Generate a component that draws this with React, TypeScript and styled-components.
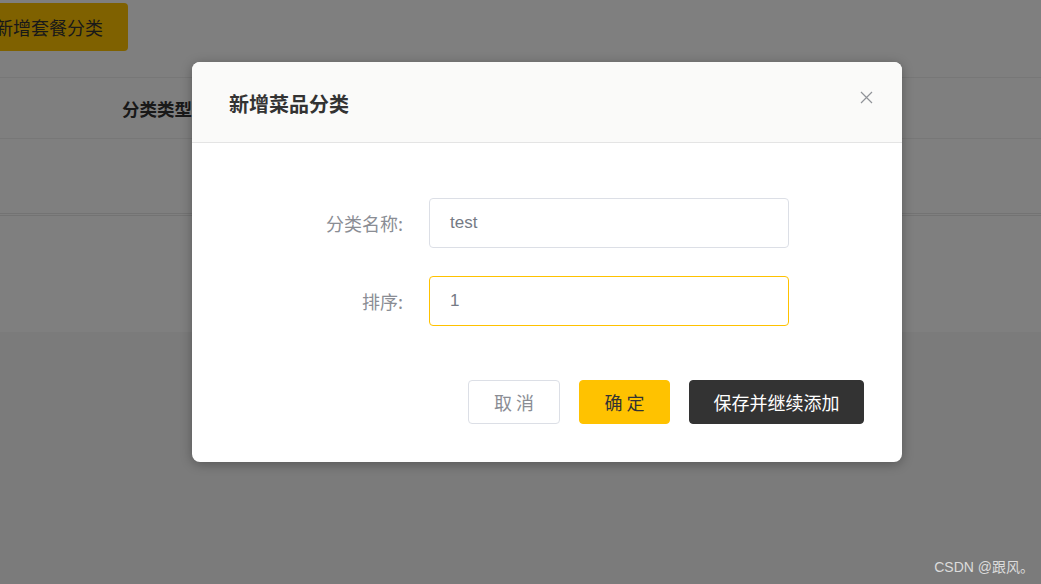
import React from "react";
import styled, { createGlobalStyle } from "styled-components";

const Global = createGlobalStyle`
  html, body { margin: 0; padding: 0; }
  body {
    width: 1041px;
    height: 584px;
    overflow: hidden;
    background: #f6f6f6;
    font-family: "Noto Sans CJK SC", "Liberation Sans", sans-serif;
  }
`;

const Page = styled.div`
  position: relative;
  width: 1041px;
  height: 584px;
`;

const Card = styled.div`
  background: #ffffff;
  height: 332px;
  display: flex;
  flex-direction: column;
`;

const Toolbar = styled.div`
  height: 77px;
  display: flex;
  align-items: flex-start;
  padding-top: 3px;
  box-sizing: border-box;
`;

const TopButton = styled.button`
  margin-left: -30px;
  height: 48px;
  padding: 0 25px;
  border: none;
  border-radius: 4px;
  background: #ffc200;
  color: #333;
  font-family: inherit;
  font-size: 18px;
`;

const TableHeader = styled.div`
  height: 60px;
  border-top: 1px solid #eeeeee;
  border-bottom: 1px solid #eeeeee;
  display: flex;
  align-items: center;
  padding-left: 122px;
  font-size: 17.5px;
  font-weight: 700;
  color: #333;
`;

const TableRow = styled.div`
  height: 74px;
  border-bottom: 3px double #e6e6e6;
`;

const Overlay = styled.div`
  position: absolute;
  inset: 0;
  background: rgba(0, 0, 0, 0.5);
  display: flex;
  align-items: flex-start;
  padding: 62px 0 0 192px;
  box-sizing: border-box;
`;

const Dialog = styled.div`
  width: 710px;
  height: 400px;
  background: #fff;
  border-radius: 8px;
  box-shadow: 0 2px 12px rgba(0, 0, 0, 0.3);
  overflow: hidden;
  display: flex;
  flex-direction: column;
`;

const Header = styled.div`
  height: 80px;
  background: #fafaf9;
  border-bottom: 1px solid #e4e4e4;
  display: flex;
  align-items: center;
  justify-content: space-between;
  padding: 0 28px 0 37px;
`;

const Title = styled.div`
  font-size: 20px;
  font-weight: 700;
  color: #333;
  margin-top: 2px;
`;

const Close = styled.button`
  background: none;
  border: none;
  padding: 0;
  width: 16px;
  height: 16px;
  display: flex;
  align-items: center;
  justify-content: center;
  margin-bottom: 9px;
`;

const Body = styled.div`
  padding-top: 55px;
  display: flex;
  flex-direction: column;
  gap: 28px;
`;

const Row = styled.div`
  display: flex;
  align-items: center;
`;

const Label = styled.label`
  width: 237px;
  padding-right: 26px;
  box-sizing: border-box;
  text-align: right;
  font-size: 18px;
  color: #8a8d94;
`;

const Input = styled.div<{ $focused?: boolean }>`
  width: 360px;
  height: 50px;
  box-sizing: border-box;
  border: 1px solid ${(p) => (p.$focused ? "#ffc200" : "#dcdfe6")};
  border-radius: 4px;
  padding: 0 20px;
  display: flex;
  align-items: center;
  font-family: "Liberation Sans", Arial, sans-serif;
  font-size: 17px;
  color: #757a85;
`;

const Footer = styled.div`
  margin-top: 54px;
  padding-right: 38px;
  display: flex;
  justify-content: flex-end;
  gap: 19px;
`;

const Btn = styled.button<{ $variant: "plain" | "primary" | "dark"; $w: number }>`
  height: 44px;
  width: ${(p) => p.$w}px;
  padding: 0;
  border-radius: 4px;
  font-family: inherit;
  font-size: 18px;
  box-sizing: border-box;
  border: 1px solid
    ${(p) => (p.$variant === "plain" ? "#dcdfe6" : p.$variant === "primary" ? "#ffc200" : "#333")};
  background: ${(p) => (p.$variant === "plain" ? "#fff" : p.$variant === "primary" ? "#ffc200" : "#333")};
  color: ${(p) => (p.$variant === "plain" ? "#8a8d94" : p.$variant === "primary" ? "#333" : "#fff")};
`;

const Watermark = styled.div`
  position: absolute;
  right: 7px;
  bottom: 8px;
  font-size: 14px;
  color: #dcdcdc;
  font-family: "Liberation Sans", "Noto Sans CJK SC", sans-serif;
`;

export default function App() {
  return (
    <>
      <Global />
      <Page>
        <Card>
          <Toolbar>
            <TopButton>新增套餐分类</TopButton>
          </Toolbar>
          <TableHeader>分类类型</TableHeader>
          <TableRow />
        </Card>
        <Overlay>
          <Dialog>
            <Header>
              <Title>新增菜品分类</Title>
              <Close aria-label="close">
                <svg width="13" height="13" viewBox="0 0 13 13">
                  <path d="M1 1L12 12M12 1L1 12" stroke="#909399" strokeWidth="1.2" />
                </svg>
              </Close>
            </Header>
            <Body>
              <Row>
                <Label>分类名称:</Label>
                <Input>test</Input>
              </Row>
              <Row>
                <Label>排序:</Label>
                <Input $focused>1</Input>
              </Row>
            </Body>
            <Footer>
              <Btn $variant="plain" $w={92}>取 消</Btn>
              <Btn $variant="primary" $w={91}>确 定</Btn>
              <Btn $variant="dark" $w={175}>保存并继续添加</Btn>
            </Footer>
          </Dialog>
        </Overlay>
        <Watermark>CSDN @跟风。</Watermark>
      </Page>
    </>
  );
}
